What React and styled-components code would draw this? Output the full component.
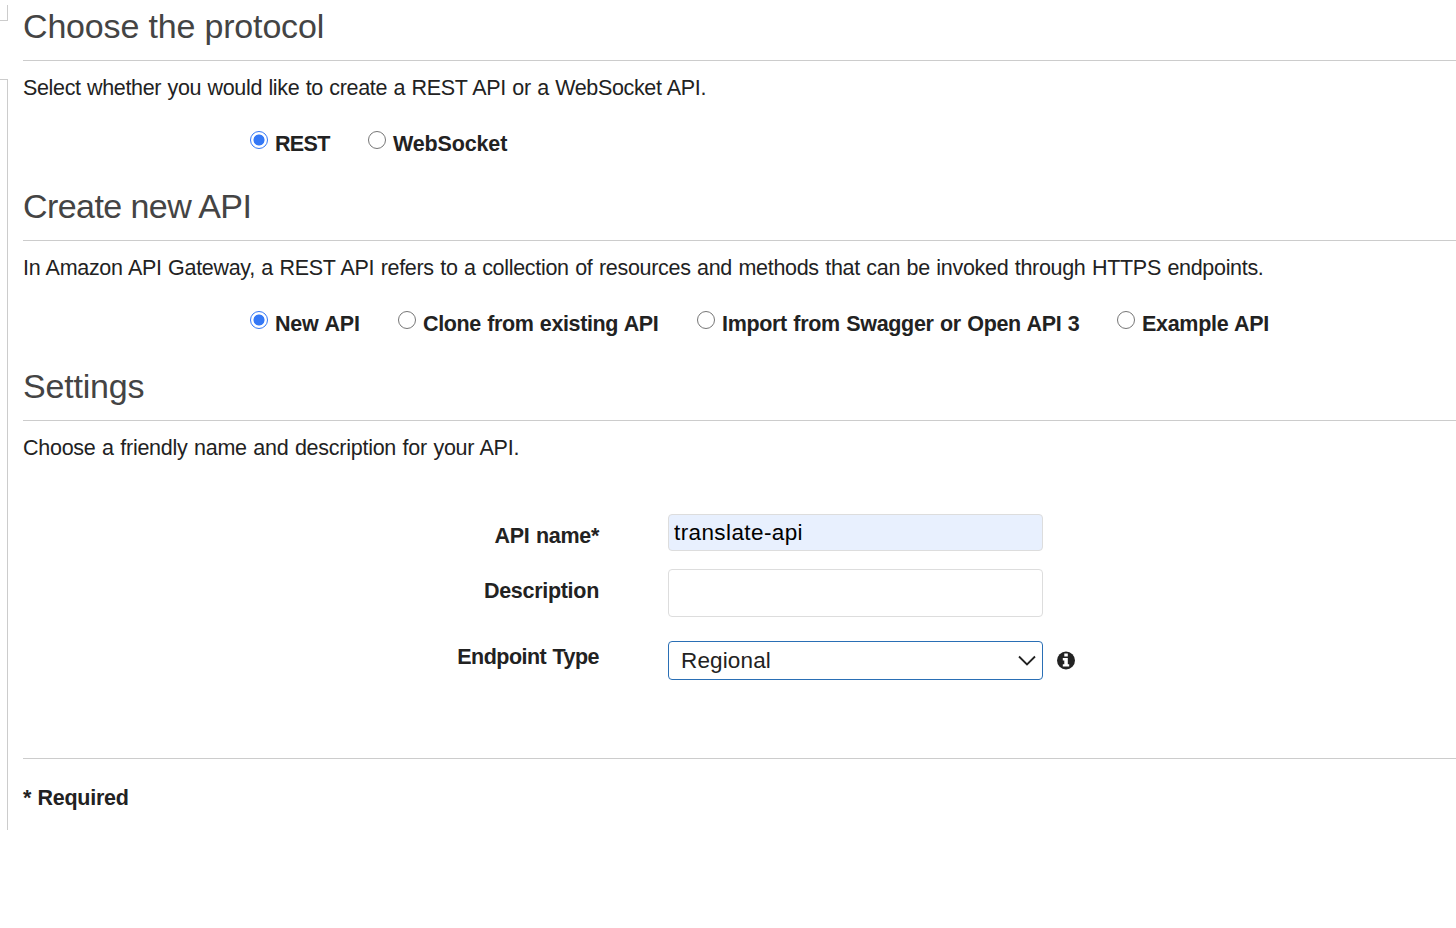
import React, { useState } from "react";
import styled, { createGlobalStyle } from "styled-components";

const GlobalStyle = createGlobalStyle`
  * { box-sizing: border-box; }
  body {
    margin: 0;
    background: #fff;
    color: #222;
    font-family: "Liberation Sans", Arial, sans-serif;
    font-size: 21.5px;
    word-spacing: 0.8px;
    overflow: hidden;
  }
`;

const Page = styled.div`
  display: flex;
  width: 100%;
  height: 928px;
`;

const Rail = styled.aside`
  display: flex;
  flex-direction: column;
  flex: none;
  width: 8px;
  padding-top: 5px;
`;

const RailTab = styled.div`
  height: 16px;
  margin-bottom: 58px;
  border-right: 1px solid #ccc;
  border-bottom: 1px solid #ccc;
`;

const RailPanel = styled.div`
  height: 751px;
  border-top: 1px solid #ccc;
  border-right: 1px solid #ccc;
`;

const Content = styled.main`
  flex: 1;
  min-width: 0;
  padding-left: 15px;
`;

const Section = styled.section`
  height: ${(p) => p.$height || 180}px;
`;

const Heading = styled.h2`
  margin: 0;
  height: 61px;
  padding-top: 6px;
  border-bottom: 1px solid #ccc;
  color: #444;
  font-size: 34px;
  font-weight: 400;
  line-height: 40px;
  letter-spacing: ${(p) => p.$track || 0}px;
  word-spacing: 0;
  white-space: nowrap;
`;

const Description = styled.p`
  margin: 0;
  padding-top: 13px;
  line-height: 28px;
  letter-spacing: ${(p) => p.$track || 0}px;
  white-space: nowrap;
`;

const RadioRow = styled.div`
  display: flex;
  gap: 39px;
  padding: 28px 0 0 227px;
`;

const RadioLabel = styled.label`
  display: flex;
  align-items: flex-start;
  gap: 7px;
  width: ${(p) => p.$width}px;
  line-height: 28px;
  font-weight: 700;
  letter-spacing: ${(p) => p.$track || 0}px;
  white-space: nowrap;
`;

const Radio = styled.input`
  appearance: none;
  flex: none;
  width: 18px;
  height: 18px;
  margin: 1px 0 0;
  border: 1.5px solid #767676;
  border-radius: 50%;
  background: #fff;
  &:checked {
    border-color: #3478f6;
    background: radial-gradient(circle, #3478f6 5.1px, #fff 5.9px);
  }
`;

const Form = styled.form`
  display: flex;
  flex-direction: column;
  padding-top: 52px;
`;

const Field = styled.div`
  display: flex;
  align-items: flex-start;
  height: ${(p) => p.$height}px;
`;

const FieldLabel = styled.label`
  width: 576px;
  margin-right: 69px;
  padding-top: ${(p) => p.$top}px;
  line-height: 28px;
  text-align: right;
  font-weight: 700;
  letter-spacing: ${(p) => p.$track || 0}px;
  white-space: nowrap;
`;

const TextInput = styled.input`
  width: 375px;
  height: 37px;
  padding: 0 5px;
  border: 1px solid #ddd;
  border-radius: 4px;
  background: #e8f0fe;
  color: #000;
  font: 22.5px "Liberation Sans", Arial, sans-serif;
  letter-spacing: 0.4px;
  outline: none;
`;

const TextArea = styled.textarea`
  display: block;
  width: 375px;
  height: 48px;
  border: 1px solid #ddd;
  border-radius: 4px;
  resize: none;
  outline: none;
`;

const SelectBox = styled.button`
  display: flex;
  align-items: center;
  justify-content: space-between;
  width: 375px;
  height: 39px;
  padding: 1px 6px 0 12px;
  border: 1px solid #2a6fb5;
  border-radius: 4px;
  background: #fff;
  color: #222;
  font: 22.5px "Liberation Sans", Arial, sans-serif;
  letter-spacing: 0.15px;
`;

const InfoIcon = styled.svg`
  margin: 10px 0 0 14px;
`;

const Footer = styled.footer`
  border-top: 1px solid #ccc;
  padding-top: 25px;
  line-height: 28px;
  font-weight: 700;
  letter-spacing: -0.28px;
`;

function RadioGroup({ name, options }) {
  const [selected, setSelected] = useState(options[0].text);
  return (
    <RadioRow>
      {options.map(({ text, width, track }) => (
        <RadioLabel key={text} $width={width} $track={track}>
          <Radio
            type="radio"
            name={name}
            checked={selected === text}
            onChange={() => setSelected(text)}
          />
          <span>{text}</span>
        </RadioLabel>
      ))}
    </RadioRow>
  );
}

const protocols = [
  { text: "REST", width: 79, track: -0.68 },
  { text: "WebSocket", width: 139, track: -0.15 },
];

const sources = [
  { text: "New API", width: 109, track: -0.19 },
  { text: "Clone from existing API", width: 260, track: -0.38 },
  { text: "Import from Swagger or Open API 3", width: 381, track: -0.33 },
  { text: "Example API", width: 152, track: -0.3 },
];

export default function App() {
  return (
    <>
      <GlobalStyle />
      <Page>
        <Rail>
          <RailTab />
          <RailPanel />
        </Rail>
        <Content>
          <Section>
            <Heading $track={-0.17}>Choose the protocol</Heading>
            <Description $track={-0.35}>
              Select whether you would like to create a REST API or a WebSocket API.
            </Description>
            <RadioGroup name="protocol" options={protocols} />
          </Section>
          <Section>
            <Heading $track={-0.57}>Create new API</Heading>
            <Description $track={-0.307}>
              In Amazon API Gateway, a REST API refers to a collection of resources and methods that can be invoked through HTTPS endpoints.
            </Description>
            <RadioGroup name="source" options={sources} />
          </Section>
          <Section $height={398}>
            <Heading $track={-0.2}>Settings</Heading>
            <Description $track={-0.258}>Choose a friendly name and description for your API.</Description>
            <Form>
              <Field $height={55}>
                <FieldLabel htmlFor="api-name" $top={8} $track={-0.3}>API name*</FieldLabel>
                <TextInput id="api-name" defaultValue="translate-api" />
              </Field>
              <Field $height={72}>
                <FieldLabel htmlFor="description" $top={8} $track={-0.29}>Description</FieldLabel>
                <TextArea id="description" />
              </Field>
              <Field $height={39}>
                <FieldLabel $top={2} $track={-0.52}>Endpoint Type</FieldLabel>
                <SelectBox type="button">
                  <span>Regional</span>
                  <svg width="18" height="12" viewBox="0 0 18 12" fill="none">
                    <path d="M1 1.5L9 9.5L17 1.5" stroke="#222" strokeWidth="1.8" />
                  </svg>
                </SelectBox>
                <InfoIcon width="18" height="19" viewBox="0 0 18 19">
                  <circle cx="9" cy="9.5" r="9" fill="#222" />
                  <path
                    d="M7.3 2.6H10.8V5.6H7.3ZM5.8 7.1H10.8V13.2H12.2V15.6H5.8V13.2H7.3V9.5H5.8Z"
                    fill="#fff"
                  />
                </InfoIcon>
              </Field>
            </Form>
          </Section>
          <Footer>* Required</Footer>
        </Content>
      </Page>
    </>
  );
}
